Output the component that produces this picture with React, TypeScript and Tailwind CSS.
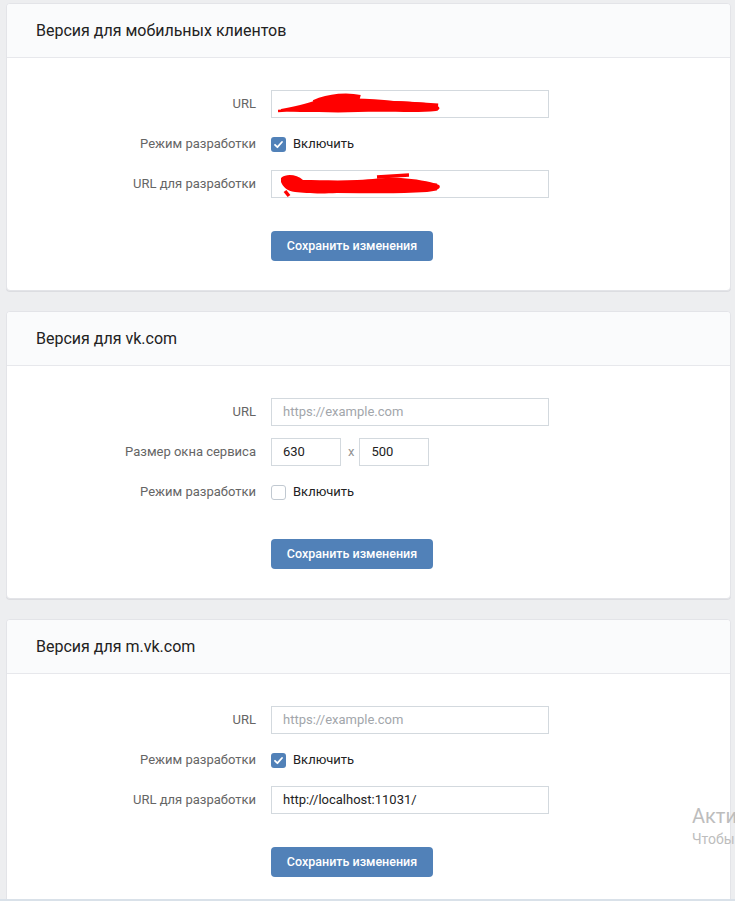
import React from "react";

const FONT = { fontFamily: "Roboto, 'Open Sans', 'Liberation Sans', sans-serif" };

function Scribble({ variant }: { variant: 1 | 2 }) {
  // redacted text in the screenshot: rough red marker strokes
  if (variant === 1) {
    return (
      <svg
        className="absolute left-[6px] top-[2px] pointer-events-none"
        width="170"
        height="24"
        viewBox="0 0 170 24"
      >
        <path
          d="M3 16 C18 13 28 11 36 8 C46 3 58 3 64 6 C80 5 98 6 116 8 C130 9 144 9 154 11 C162 13 164 16 158 18 C140 20 110 18 80 19 C60 20 40 19 22 19 C14 19 8 18 3 17 Z"
          fill="#f00"
        />
        <path d="M0 18 L32 16" stroke="#f00" strokeWidth="2.5" />
        <path d="M36 10 C52 3 70 2 82 5" stroke="#f00" strokeWidth="6" fill="none" />
        <path d="M60 12 C90 10 120 11 160 14" stroke="#f00" strokeWidth="7" fill="none" />
      </svg>
    );
  }
  return (
    <svg
      className="absolute left-[5px] top-[1px] pointer-events-none"
      width="170"
      height="26"
      viewBox="0 0 170 26"
    >
      <path
        d="M4 6 C10 1 20 3 26 8 C42 8 60 9 80 8 C100 7 110 5 124 6 C138 7 152 9 162 13 C165 16 160 19 150 20 C120 22 90 21 60 21 C40 22 28 21 18 20 C10 19 6 15 4 10 Z"
        fill="#f00"
      />
      <path d="M20 14 C60 13 110 13 160 15" stroke="#f00" strokeWidth="7" fill="none" />
      <path d="M8 19 L12 24" stroke="#f00" strokeWidth="3.5" />
      <path d="M100 5 L132 3" stroke="#f00" strokeWidth="3.5" />
    </svg>
  );
}

function TextInput({
  value,
  placeholder,
  width = "w-[278px]",
  scribble,
}: {
  value?: string;
  placeholder?: string;
  width?: string;
  scribble?: 1 | 2;
}) {
  return (
    <div
      className={`relative h-[28px] ${width} border border-[#d3d9de] bg-white flex items-center px-[11px] text-[13px]`}
    >
      {value ? (
        <span className="text-[#222]">{value}</span>
      ) : placeholder ? (
        <span className="text-[#a2a6ab]">{placeholder}</span>
      ) : null}
      {scribble && <Scribble variant={scribble} />}
    </div>
  );
}

function Checkbox({ checked }: { checked: boolean }) {
  return (
    <div className="flex items-center gap-[7px]">
      {checked ? (
        <span className="w-[15px] h-[15px] rounded-[3px] bg-[#5181b8] flex items-center justify-center">
          <svg width="11" height="11" viewBox="0 0 11 11">
            <path
              d="M2 5.8 L4.4 8.2 L9 3"
              stroke="#fff"
              strokeWidth="1.8"
              fill="none"
              strokeLinecap="round"
              strokeLinejoin="round"
            />
          </svg>
        </span>
      ) : (
        <span className="w-[15px] h-[15px] rounded-[3px] border border-[#c1c9d1] bg-white" />
      )}
      <span className="text-[13px] text-[#222]">Включить</span>
    </div>
  );
}

function Row({ label, children }: { label: string; children: React.ReactNode }) {
  return (
    <div className="flex items-center h-[28px]">
      <div className="w-[249px] text-right text-[13px] text-[#656565]">{label}</div>
      <div className="ml-[15px] flex items-center">{children}</div>
    </div>
  );
}

function Card({ title, children }: { title: string; children: React.ReactNode }) {
  return (
    <section className="bg-white border border-[#e3e4e8] rounded-[4px] shadow-[0_1px_0_0_#dcdde1] overflow-hidden shrink-0">
      <header className="h-[54px] px-[29px] flex items-center bg-[#fafbfc] border-b border-[#e7e8ec] text-[16px] text-[#222]">
        {title}
      </header>
      <div className="pt-[32px] pb-[29px]">
        <div className="flex flex-col gap-[12px]">{children}</div>
        <button className="mt-[33px] ml-[264px] h-[30px] w-[162px] rounded-[4px] bg-[#5181b8] text-white text-[12.5px] font-medium">
          Сохранить изменения
        </button>
      </div>
    </section>
  );
}

export default function App() {
  return (
    <div className="relative h-[901px] overflow-hidden bg-[#edeef0] flex flex-col" style={FONT}>
      <div className="flex-1 overflow-hidden pt-[3px] pl-[6px] pr-[4px] flex flex-col gap-[20px]">
        <Card title="Версия для мобильных клиентов">
          <Row label="URL">
            <TextInput scribble={1} />
          </Row>
          <Row label="Режим разработки">
            <Checkbox checked />
          </Row>
          <Row label="URL для разработки">
            <TextInput scribble={2} />
          </Row>
        </Card>

        <Card title="Версия для vk.com">
          <Row label="URL">
            <TextInput placeholder="https://example.com" />
          </Row>
          <Row label="Размер окна сервиса">
            <TextInput value="630" width="w-[70px]" />
            <span className="ml-[7px] mr-[5px] text-[13px] text-[#939393]">x</span>
            <TextInput value="500" width="w-[70px]" />
          </Row>
          <Row label="Режим разработки">
            <Checkbox checked={false} />
          </Row>
        </Card>

        <Card title="Версия для m.vk.com">
          <Row label="URL">
            <TextInput placeholder="https://example.com" />
          </Row>
          <Row label="Режим разработки">
            <Checkbox checked />
          </Row>
          <Row label="URL для разработки">
            <TextInput value="http://localhost:11031/" />
          </Row>
        </Card>
      </div>
      <div className="h-[2px] bg-[#d9e1e9]" />

      {/* windows activation watermark */}
      <div className="absolute left-[692px] top-[806px] text-[#bdbdbd] whitespace-nowrap pointer-events-none leading-none">
        <div className="text-[20px]">Активация Windows</div>
        <div className="text-[14px] mt-[6px]">Чтобы активировать Windows</div>
      </div>
    </div>
  );
}
